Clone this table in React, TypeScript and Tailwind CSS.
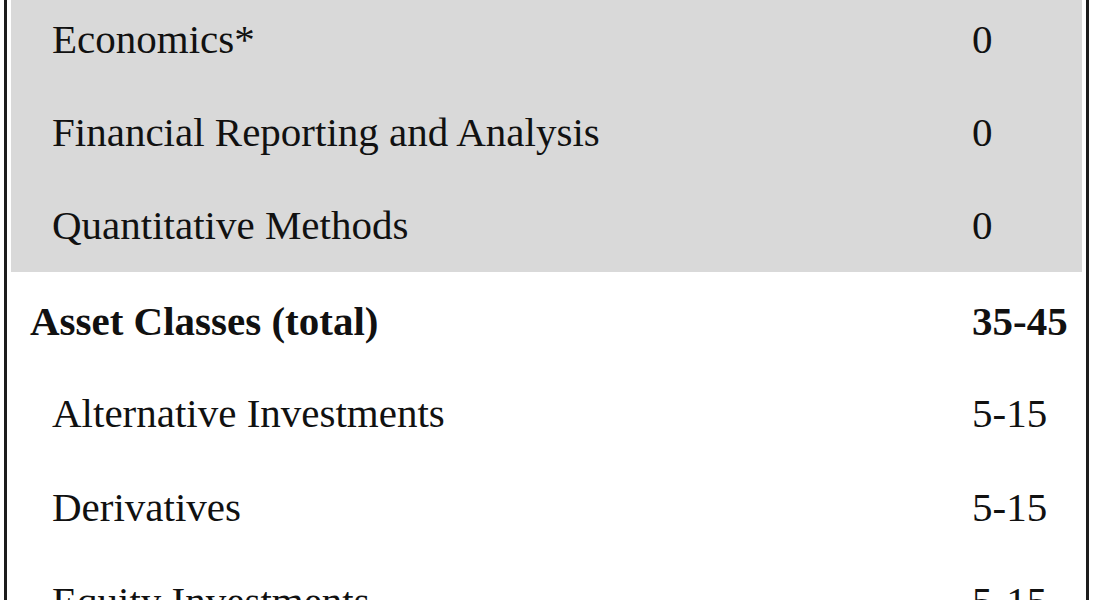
const rows: { label: string; value: string; bold?: boolean; shaded?: boolean }[] = [
  { label: 'Economics*', value: '0', shaded: true },
  { label: 'Financial Reporting and Analysis', value: '0', shaded: true },
  { label: 'Quantitative Methods', value: '0', shaded: true },
  { label: 'Asset Classes (total)', value: '35-45', bold: true },
  { label: 'Alternative Investments', value: '5-15' },
  { label: 'Derivatives', value: '5-15' },
  { label: 'Equity Investments', value: '5-15' },
]

export default function App() {
  return (
    <div
      className="h-[600px] w-[1095px] overflow-hidden bg-white pl-[4px] pr-[6px] text-[#111]"
      style={{ fontFamily: '"Liberation Serif", "Times New Roman", serif' }}
    >
      <div className="-mt-[7px] border-x-[3px] border-[#1c1c1c] px-[4px]">
        {rows.map((r) => (
          <div
            key={r.label}
            className={`grid grid-cols-[961px_1fr] items-center text-[41px] leading-none ${
              r.shaded ? 'h-[93px] bg-[#d9d9d9]' : 'h-[94px] bg-white'
            } ${r.bold ? 'font-bold pt-[5px]' : ''}`}
          >
            <span className={r.bold ? 'pl-[19px]' : 'pl-[41px]'}>{r.label}</span>
            <span>{r.value}</span>
          </div>
        ))}
      </div>
    </div>
  )
}
